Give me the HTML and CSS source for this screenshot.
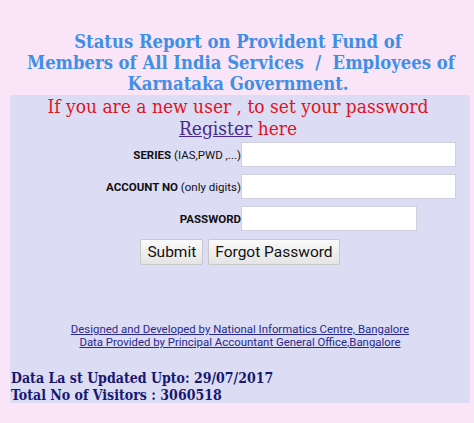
FILE: index.html
```html
<!DOCTYPE html>
<html>
<head>
<meta charset="utf-8">
<link rel="stylesheet" href="styles.css">
</head>
<body>
<div class="page">
  <h1 class="title">Status Report on Provident Fund of<br>&nbsp;Members of All India Services &nbsp;/ &nbsp;Employees of<br>Karnataka Government.</h1>
  <div class="box">
    <p class="notice">If you are a new user , to set your password<br><a href="#" class="reg">Register</a> here</p>
    <div class="form">
      <label class="lbl"><b>SERIES</b> (IAS,PWD ,...)</label>
      <input class="inp" type="text">
      <label class="lbl"><b>ACCOUNT NO</b> (only digits)</label>
      <input class="inp" type="text">
      <label class="lbl"><b>PASSWORD</b></label>
      <input class="inp short" type="password">
    </div>
    <div class="buttons">
      <button class="btn">Submit</button>
      <button class="btn">Forgot Password</button>
    </div>
    <div class="links">
      <a href="#">Designed and Developed by National Informatics Centre, Bangalore</a><br>
      <a href="#">Data Provided by Principal Accountant General Office,Bangalore</a>
    </div>
    <div class="stats">
      Data La st Updated Upto: 29/07/2017<br>
      Total No of Visitors : 3060518
    </div>
  </div>
</div>
</body>
</html>
```
FILE: styles.css
```css
html, body {
  margin: 0;
  padding: 0;
  background: #f9e5f7;
}
.page {
  padding: 0 4px 0 10px;
}
.title {
  margin: 0;
  padding-top: 31px;
  font-family: "DejaVu Serif", serif;
  font-stretch: condensed;
  font-weight: bold;
  font-size: 18.3px;
  line-height: 21px;
  color: #3f8fe6;
  text-align: center;
  height: 64px;
  white-space: nowrap;
  padding-right: 4px;
}
.box {
  background: #dcdcf5;
  width: 460px;
  height: 308px;
  box-sizing: border-box;
  padding-top: 0;
}
.notice {
  margin: 0;
  font-family: "DejaVu Serif", serif;
  font-stretch: condensed;
  font-size: 19px;
  line-height: 22px;
  color: #e0141e;
  text-align: center;
  white-space: nowrap;
  padding-right: 4px;
}
.reg {
  color: #4a2a8c;
}
.form {
  display: grid;
  grid-template-columns: 135px 215px;
  row-gap: 7px;
  margin: 3px 0 0 96px;
  align-items: center;
}
.lbl {
  font-family: Roboto, sans-serif;
  font-size: 11.5px;
  color: #111;
  text-align: right;
  white-space: nowrap;
}
.inp {
  box-sizing: border-box;
  height: 25px;
  width: 215px;
  border: 1px solid #cfcfdf;
  background: #fff;
  margin: 0;
}
.inp.short {
  width: 176px;
}
.buttons {
  display: flex;
  gap: 5px;
  justify-content: center;
  margin-top: 8px;
}
.btn {
  font-family: Roboto, sans-serif;
  font-size: 15.5px;
  height: 26px;
  padding: 0 6px;
  border: 1px solid #c8c8c8;
  border-radius: 2px;
  background: linear-gradient(#fafafa, #e4e4e4);
  color: #111;
}
.links {
  margin-top: 58px;
  text-align: center;
  font-family: Roboto, sans-serif;
  font-size: 11.4px;
  line-height: 13px;
}
.links a {
  color: #2a2a8e;
}
.stats {
  margin-top: 21px;
  font-family: "DejaVu Serif", serif;
  font-stretch: condensed;
  font-weight: bold;
  font-size: 14px;
  line-height: 17px;
  color: #181870;
  padding-left: 1px;
}
```
